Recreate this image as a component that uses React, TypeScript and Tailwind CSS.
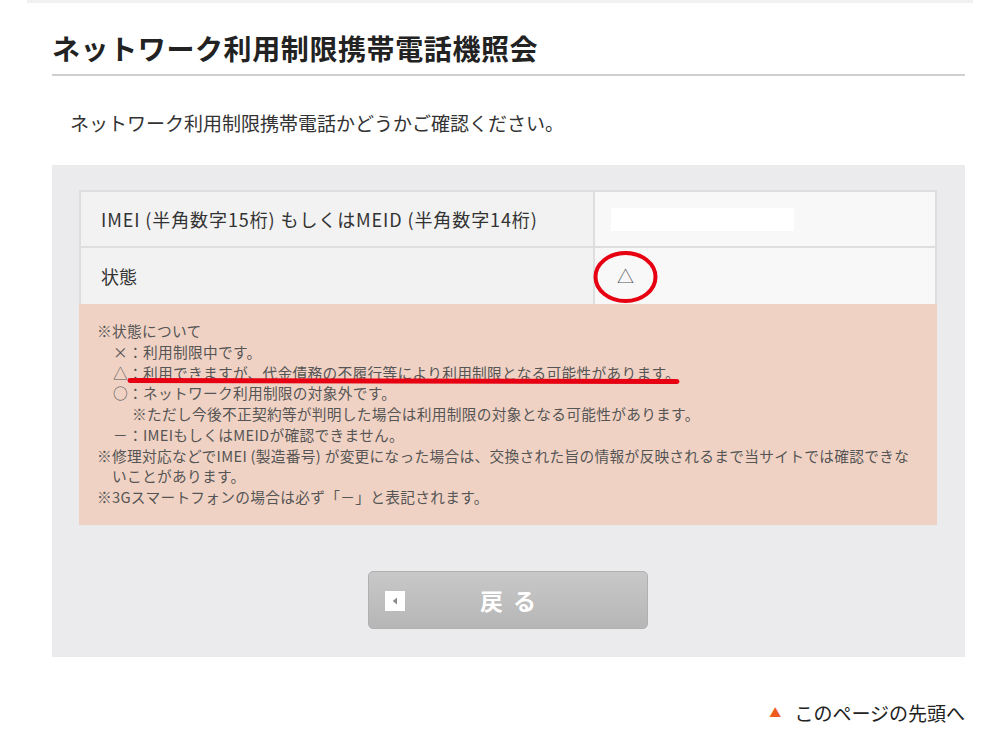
import React from "react";

const font = { fontFamily: '"Noto Sans CJK JP", "Noto Sans", sans-serif' };

const NoteBox: React.FC = () => (
  <div className="bg-[#f0d2c4] pl-[18px] pr-[16px] pt-[17px] pb-[17px] text-[14.7px] leading-[20.75px] tracking-[0.3px] text-[#555]">
    <p>※状態について</p>
    <p className="pl-[16px]">×：利用制限中です。</p>
    <p className="pl-[16px]">△：利用できますが、代金債務の不履行等により利用制限となる可能性があります。</p>
    <p className="pl-[16px]">○：ネットワーク利用制限の対象外です。</p>
    <p className="pl-[35px]">※ただし今後不正契約等が判明した場合は利用制限の対象となる可能性があります。</p>
    <p className="pl-[16px]">－：IMEIもしくはMEIDが確認できません。</p>
    <p className="whitespace-nowrap">
      ※修理対応などでIMEI (製造番号) が変更になった場合は、交換された旨の情報が反映されるまで当サイトでは確認できな
    </p>
    <p className="pl-[15px]">いことがあります。</p>
    <p>※3Gスマートフォンの場合は必ず「－」と表記されます。</p>
  </div>
);

export default function App() {
  return (
    <div className="relative w-[1000px] h-[750px] bg-white overflow-hidden" style={font}>
      <div className="mx-[27px] h-[3px] bg-[#f1f1f1]" />

      <div className="ml-[52px] w-[913px]">
        <h1 className="pt-[25px] text-[28px] font-bold leading-[40px] text-[#222] tracking-[0.6px]">
          ネットワーク利用制限携帯電話機照会
        </h1>
        <div className="mt-[6px] h-[2px] bg-[#cfcfcf]" />

        <p className="mt-[33px] pl-[18px] text-[19px] leading-[28px] text-[#333]">
          ネットワーク利用制限携帯電話かどうかご確認ください。
        </p>

        <div className="mt-[28px] bg-[#ebebed] pl-[27px] pr-[28px] pt-[25px] pb-[28px]">
          <div className="border-2 border-b-0 border-[#dedede]">
            <div className="flex h-[56px] border-b-2 border-[#dedede]">
              <div className="flex w-[514px] items-center border-r-2 border-[#dedede] bg-[#f2f2f2] pl-[20px] text-[18px] tracking-[0.9px] text-[#333]">
                IMEI (半角数字15桁) もしくはMEID (半角数字14桁)
              </div>
              <div className="flex flex-1 items-center bg-[#f8f8f8] pl-[16px]">
                <div className="h-[23px] w-[183px] bg-white" />
              </div>
            </div>
            <div className="flex h-[56px]">
              <div className="flex w-[514px] items-center border-r-2 border-[#dedede] bg-[#f2f2f2] pl-[20px] text-[18px] text-[#333]">
                状態
              </div>
              <div className="flex flex-1 items-center bg-[#f8f8f8] pl-[22px] text-[17px] text-[#555]">
                △
              </div>
            </div>
          </div>
          <NoteBox />

          <div className="mt-[46px] flex justify-center">
            <button className="relative flex h-[58px] w-[280px] items-center justify-center rounded-[5px] border border-[#b0b0b0] bg-gradient-to-b from-[#c8c8c8] to-[#b6b6b6]">
              <span className="absolute left-[16px] top-[19px] flex h-[20px] w-[20px] items-center justify-center bg-white">
                <svg width="6" height="8" viewBox="0 0 6 8">
                  <path d="M5 0.5 L0.8 4 L5 7.5 Z" fill="#8a8a8a" />
                </svg>
              </span>
              <span className="text-[23px] font-bold tracking-[10px] text-white pl-[10px]">戻る</span>
            </button>
          </div>
        </div>

        <div className="mt-[42px] flex items-center justify-end text-[19px] text-[#222]">
          <span className="mr-[13px] text-[12px] text-[#ef5b1c]">▲</span>
          このページの先頭へ
        </div>
      </div>

      <svg className="pointer-events-none absolute left-0 top-0" width="1000" height="750">
        <ellipse cx="625.5" cy="277" rx="30" ry="24" fill="none" stroke="#e60012" strokeWidth="4" />
        <path d="M130 380.5 L677 381.5" stroke="#e60012" strokeWidth="5" strokeLinecap="round" />
      </svg>
    </div>
  );
}
